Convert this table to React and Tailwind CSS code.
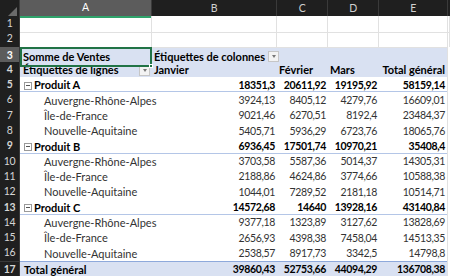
import React from "react";

const font = { fontFamily: "Lato, 'Open Sans', sans-serif" };

const cols = ["A", "B", "C", "D", "E"];
const grid = "grid grid-cols-[20px_132px_125px_51px_51px_69px_2px]";
const lbl = "text-[11px] tracking-[0px]";

const body = [
  { n: 5, type: "prod", label: "Produit A", v: ["18351,3", "20611,92", "19195,92", "58159,14"] },
  { n: 6, type: "reg", label: "Auvergne-Rhône-Alpes", v: ["3924,13", "8405,12", "4279,76", "16609,01"] },
  { n: 7, type: "reg", label: "Île-de-France", v: ["9021,46", "6270,51", "8192,4", "23484,37"] },
  { n: 8, type: "reg", label: "Nouvelle-Aquitaine", v: ["5405,71", "5936,29", "6723,76", "18065,76"] },
  { n: 9, type: "prod", label: "Produit B", v: ["6936,45", "17501,74", "10970,21", "35408,4"] },
  { n: 10, type: "reg", label: "Auvergne-Rhône-Alpes", v: ["3703,58", "5587,36", "5014,37", "14305,31"] },
  { n: 11, type: "reg", label: "Île-de-France", v: ["2188,86", "4624,86", "3774,66", "10588,38"] },
  { n: 12, type: "reg", label: "Nouvelle-Aquitaine", v: ["1044,01", "7289,52", "2181,18", "10514,71"] },
  { n: 13, type: "prod", label: "Produit C", v: ["14572,68", "14640", "13928,16", "43140,84"] },
  { n: 14, type: "reg", label: "Auvergne-Rhône-Alpes", v: ["9377,18", "1323,89", "3127,62", "13828,69"] },
  { n: 15, type: "reg", label: "Île-de-France", v: ["2656,93", "4398,38", "7458,04", "14513,35"] },
  { n: 16, type: "reg", label: "Nouvelle-Aquitaine", v: ["2538,57", "8917,73", "3342,5", "14798,8"] },
  { n: 17, type: "total", label: "Total général", v: ["39860,43", "52753,66", "44094,29", "136708,38"] },
];

function RowNum({ n, active }) {
  return (
    <div className={`flex items-center justify-center border-r border-b border-[#3a3a3a] text-[10.5px] ${active ? "bg-[#5c5c5c] text-white" : "bg-[#1f1f1f] text-[#d6d6d6]"}`}>
      {n}
    </div>
  );
}

function Drop() {
  return (
    <span className="flex h-[11px] w-[11px] shrink-0 items-center justify-center border border-[#c6c6c6] bg-[#f3f3f3]">
      <span className="h-0 w-0 border-x-[2.5px] border-t-[3px] border-x-transparent border-t-[#777]" />
    </span>
  );
}

function Minus() {
  return (
    <span className="mr-[2px] flex h-[8px] w-[8px] items-center justify-center border border-[#9a9a9a] bg-white">
      <span className="h-px w-[4px] bg-[#555]" />
    </span>
  );
}

export default function App() {
  return (
    <div className="h-[276px] w-[450px] overflow-hidden bg-white tracking-[-0.35px] text-[10.5px]" style={font}>
      {/* header */}
      <div className={`${grid} h-[16px] bg-[#1f1f1f] text-[#d0d0d0]`}>
        <div className="relative border-r border-[#3a3a3a]">
          <span className="absolute bottom-[2px] right-[2px] h-0 w-0 border-b-[9px] border-l-[9px] border-l-transparent border-b-[#6a6a6a]" />
        </div>
        {cols.map((c) => (
          <div
            key={c}
            className={`flex items-center justify-center border-r border-[#3a3a3a] ${c === "A" ? "border-b-2 border-b-[#2fa36b] bg-[#5c5c5c] text-white" : ""}`}
          >
            {c}
          </div>
        ))}
        <div />
      </div>

      {/* rows 1-2 */}
      {[1, 2].map((n) => (
        <div key={n} className={`${grid} h-[15.3px]`}>
          <RowNum n={n} />
          {[0, 1, 2, 3, 4, 5].map((i) => (
            <div key={i} className="border-r border-b border-[#e1e1e1]" />
          ))}
        </div>
      ))}

      {/* row 3 */}
      <div className={`${grid} h-[15.3px] bg-[#d9e1f2] font-bold text-black`}>
        <RowNum n={3} active />
        <div className={`relative flex items-center border-2 border-[#217346] pl-[1px] ${lbl}`}>
          Somme de Ventes
          <span className="absolute -bottom-[3px] -right-[3px] h-[4px] w-[4px] border border-white bg-[#217346]" />
        </div>
        <div className={`flex items-center gap-[3px] pl-[2px] whitespace-nowrap ${lbl}`}>
          Étiquettes de colonnes <Drop />
        </div>
        <div />
        <div />
        <div className="border-r border-[#e1e1e1]" />
        <div className="bg-white" />
      </div>

      {/* row 4 */}
      <div className={`${grid} h-[15.3px] bg-[#d9e1f2] font-bold text-black`}>
        <RowNum n={4} />
        <div className={`flex items-center justify-between pl-[3px] pr-[2px] ${lbl}`}>
          Étiquettes de lignes <Drop />
        </div>
        <div className={`flex items-center pl-[2px] ${lbl}`}>Janvier</div>
        <div className={`flex items-center pl-[2px] ${lbl}`}>Février</div>
        <div className={`flex items-center pl-[2px] ${lbl}`}>Mars</div>
        <div className={`flex items-center justify-end pr-[2px] border-r border-[#e1e1e1] whitespace-nowrap ${lbl}`}>Total général</div>
        <div className="bg-white" />
      </div>

      {body.map((r) => {
        const rowCls =
          r.type === "prod"
            ? "font-bold text-black border-b border-[#b4c6e7]"
            : r.type === "total"
            ? "font-bold text-black bg-[#d9e1f2] border-t border-[#8ea9db]"
            : "text-[#333]";
        return (
          <div key={r.n} className={`${grid} h-[15.3px] ${rowCls}`}>
            <RowNum n={r.n} />
            <div className={`flex items-center whitespace-nowrap ${lbl} ${r.type === "reg" ? "pl-[24px]" : "pl-[4px]"}`}>
              {r.type === "prod" && <Minus />}
              {r.label}
            </div>
            {r.v.map((v, i) => (
              <div key={i} className={`flex items-center justify-end pr-[2px] ${i === 3 ? "border-r border-[#e1e1e1]" : ""}`}>
                {v}
              </div>
            ))}
            <div className="bg-white" />
          </div>
        );
      })}
    </div>
  );
}
